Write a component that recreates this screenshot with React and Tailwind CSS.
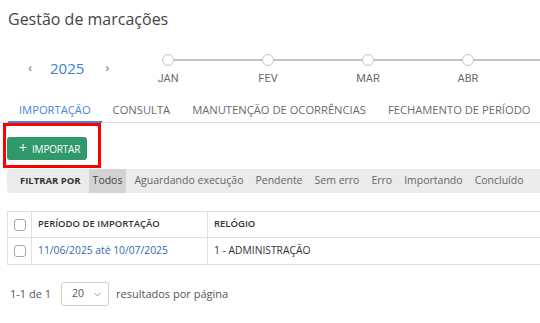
import { useState } from 'react'

const months = ['JAN', 'FEV', 'MAR', 'ABR']
const tabs = ['IMPORTAÇÃO', 'CONSULTA', 'MANUTENÇÃO DE OCORRÊNCIAS', 'FECHAMENTO DE PERÍODO']
const filters = ['Todos', 'Aguardando execução', 'Pendente', 'Sem erro', 'Erro', 'Importando', 'Concluído']

const Checkbox = () => (
  <span className="block w-[12px] h-[12px] rounded-[3px] border border-[#a9a9a9] bg-white" />
)

const App = () => {
  const [tab, setTab] = useState(0)
  const [filter, setFilter] = useState(0)

  return (
    <div className="w-[540px] h-[323px] overflow-hidden bg-white text-[#444] font-['Open_Sans',sans-serif]">
      <h1 className="pl-[8px] pt-[8px] text-[16px] leading-[22px] text-[#444] font-normal">Gestão de marcações</h1>

      <div className="flex items-start mt-[24px] h-[40px]">
        <div className="flex items-center shrink-0 w-[118px] mt-[4px] text-[#3d7fd9]">
          <button className="ml-[26px] w-[8px] text-[12px] leading-[20px] text-[#4b6fae]">‹</button>
          <span className="ml-[16px] text-[15px] leading-[20px]">2025</span>
          <button className="ml-[19px] w-[8px] text-[12px] leading-[20px] text-[#4b6fae]">›</button>
        </div>
        <div className="flex shrink-0">
          {months.map((m, i) => (
            <div key={m} className="w-[100px] flex flex-col items-center shrink-0">
              <div className="flex items-center w-full h-[12px]">
                <span className={`flex-1 h-[1.5px] ${i === 0 ? '' : 'bg-[#c4c4c4]'}`} />
                <span className="w-[12px] h-[12px] rounded-full border-[1.5px] border-[#c4c4c4] bg-white" />
                <span className="flex-1 h-[1.5px] bg-[#c4c4c4]" />
              </div>
              <span className="mt-[6px] text-[11px] leading-[13px] text-[#6a6a6a] font-['Roboto',sans-serif]">{m}</span>
            </div>
          ))}
          <div className="w-[40px] h-[12px] flex items-center shrink-0">
            <span className="w-full h-[1.5px] bg-[#c4c4c4]" />
          </div>
        </div>
      </div>

      <div className="flex mt-[6px] border-b border-[#dedede] pl-[8px]">
        {tabs.map((t, i) => (
          <button
            key={t}
            onClick={() => setTab(i)}
            className={`px-[11px] pt-[2px] pb-[3px] -mb-px text-[11.2px] leading-[16px] whitespace-nowrap border-b-2 ${tab === i ? 'text-[#4a86d8] border-[#4a86d8]' : 'text-[#6b6b6b] border-transparent'}`}
          >
            {t}
          </button>
        ))}
      </div>

      <div className="ml-[3px] w-[98px] h-[45px] border-[3px] border-[#ff0000] pt-[11px] pl-[1px]">
        <button className="flex items-center gap-[5px] w-[80px] h-[23px] rounded-[3px] bg-[#30996b] text-white pl-[12px]">
          <span className="text-[14px] leading-[14px] -mt-[2px]">+</span>
          <span className="text-[10px] leading-[14px] tracking-[-0.2px]">IMPORTAR</span>
        </button>
      </div>

      <div className="flex items-stretch ml-[7px] mt-[1px] w-[560px] h-[24px] bg-[#ebebeb] rounded-l-[4px] text-[10.5px]">
        <span className="flex items-center pl-[13px] pr-[8px] text-[9.5px] font-bold text-[#333]">FILTRAR POR</span>
        {filters.map((f, i) => (
          <button
            key={f}
            onClick={() => setFilter(i)}
            className={`flex items-center px-[4px] mr-[4px] ${filter === i ? 'bg-[#d3d3d3] text-[#444]' : 'text-[#666]'}`}
          >
            {f}
          </button>
        ))}
      </div>

      <div className="ml-[7px] mt-[18px] w-[560px]">
        <div className="flex h-[27px] border-y border-l border-[#e0e0e0]">
          <div className="w-[24px] flex items-center justify-center border-r border-[#e0e0e0]"><Checkbox /></div>
          <div className="w-[176px] flex items-center pl-[6px] text-[9.5px] font-semibold text-[#333] border-r border-[#e0e0e0]">PERÍODO DE IMPORTAÇÃO</div>
          <div className="flex-1 flex items-center pl-[6px] text-[9.5px] font-semibold text-[#333]">RELÓGIO</div>
        </div>
        <div className="flex h-[27px] border-b border-l border-[#e0e0e0] text-[10.3px]">
          <div className="w-[24px] flex items-center justify-center border-r border-[#e0e0e0]"><Checkbox /></div>
          <div className="w-[176px] flex items-center pl-[6px] text-[#3467a8] border-r border-[#e0e0e0]">11/06/2025 até 10/07/2025</div>
          <div className="flex-1 flex items-center pl-[6px] text-[#333]">1 - ADMINISTRAÇÃO</div>
        </div>
      </div>

      <div className="flex items-center mt-[17px] pl-[10px] text-[11px] text-[#555]">
        <span>1-1 de 1</span>
        <div className="ml-[10px] flex items-center w-[48px] h-[24px] border border-[#cfcfcf] rounded-[3px] pl-[10px] text-[10.5px] text-[#555]">
          <span>20</span>
          <svg className="ml-[10px]" width="7" height="5" viewBox="0 0 7 5" fill="none">
            <path d="M0.5 1 L3.5 4 L6.5 1" stroke="#999" strokeWidth="1" />
          </svg>
        </div>
        <span className="ml-[7px]">resultados por página</span>
      </div>
    </div>
  )
}

export default App
